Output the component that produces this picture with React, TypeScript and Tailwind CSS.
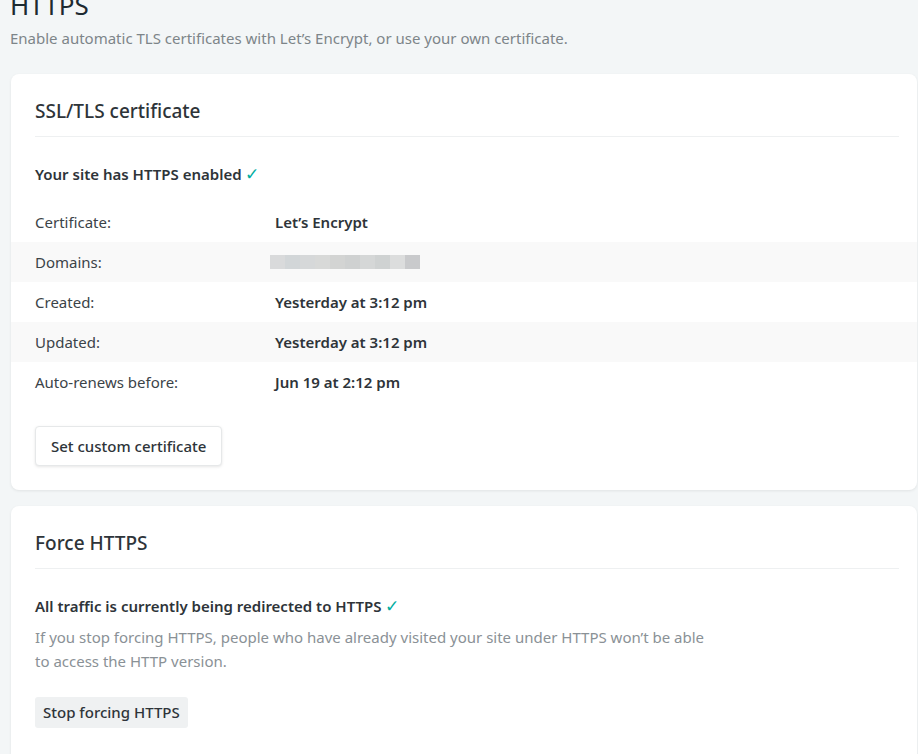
import React from "react";

const font = { fontFamily: '"Noto Sans", "Open Sans", sans-serif' };

function Check() {
  return <span className="text-[#00ad9f] font-normal text-[17px]">✓</span>;
}

function Blur() {
  const shades = ["#d9dadb", "#d2d6d8", "#d6d8d9", "#d8d9d8", "#d3d4d3", "#cfd1d1", "#d5d7d7", "#cfd2d2", "#dcdddd", "#c9cacc"];
  return (
    <div className="flex h-[14px] ml-[-5px]">
      {shades.map((c, i) => (
        <div key={i} className="w-[15px] h-full" style={{ background: c }} />
      ))}
    </div>
  );
}

const rows: [string, React.ReactNode][] = [
  ["Certificate:", "Let’s Encrypt"],
  ["Domains:", <Blur />],
  ["Created:", "Yesterday at 3:12 pm"],
  ["Updated:", "Yesterday at 3:12 pm"],
  ["Auto-renews before:", "Jun 19 at 2:12 pm"],
];

export default function App() {
  return (
    <div className="w-[918px] h-[754px] overflow-hidden bg-[#f3f6f7] text-[#2e3439]" style={font}>
      <div className="pl-[10px] pt-0">
        <h1 className="text-[26px] leading-[30px] mt-[-10px] text-[#1d2a31] font-normal">HTTPS</h1>
        <p className="text-[15px] leading-[20px] mt-[8px] text-[#7d8589]">
          Enable automatic TLS certificates with Let’s Encrypt, or use your own certificate.
        </p>
      </div>
      <div className="ml-[11px] mt-[26px] w-[906px] flex flex-col gap-[16px]">
        <div className="bg-white rounded-[8px] shadow-[0_1px_3px_rgba(0,0,0,0.08)] pt-[24px] pb-[24px]">
          <div className="pl-[24px] pr-[18px]">
            <h2 className="text-[19px] leading-[26px] font-medium text-[#2e3439] pb-[12px] border-b border-[#eef0f1]">
              SSL/TLS certificate
            </h2>
            <p className="mt-[24px] text-[15px] leading-[26px] font-semibold text-[#2e3439]">
              Your site has HTTPS enabled <Check />
            </p>
          </div>
          <div className="mt-[15px]">
            {rows.map(([k, v], i) => (
              <div
                key={i}
                className={`flex items-center h-[40px] pl-[24px] text-[15px] ${i % 2 === 1 ? "bg-[#f9f9f9]" : ""}`}
              >
                <div className="w-[240px] text-[#3b4348]">{k}</div>
                <div className="font-semibold text-[#2e3439]">{v}</div>
              </div>
            ))}
          </div>
          <div className="pl-[24px] mt-[24px]">
            <button className="h-[40px] px-[15px] rounded-[4px] bg-white border border-[#e6e8e9] shadow-[0_1px_3px_rgba(0,0,0,0.1)] text-[15px] font-medium text-[#2e3439]">
              Set custom certificate
            </button>
          </div>
        </div>
        <div className="bg-white rounded-[8px] shadow-[0_1px_3px_rgba(0,0,0,0.08)] pt-[24px] pb-[40px] pl-[24px] pr-[18px]">
          <h2 className="text-[19px] leading-[26px] font-medium text-[#2e3439] pb-[12px] border-b border-[#eef0f1]">
            Force HTTPS
          </h2>
          <p className="mt-[24px] text-[15px] leading-[26px] font-semibold text-[#2e3439]">
            All traffic is currently being redirected to HTTPS <Check />
          </p>
          <p className="mt-[6px] text-[15px] leading-[24px] text-[#8a9196] w-[690px]">
            If you stop forcing HTTPS, people who have already visited your site under HTTPS won’t be able
            <br />
            to access the HTTP version.
          </p>
          <button className="mt-[24px] h-[31px] px-[8px] rounded-[3px] bg-[#eff1f2] text-[15px] font-medium text-[#2e3439]">
            Stop forcing HTTPS
          </button>
        </div>
      </div>
    </div>
  );
}
